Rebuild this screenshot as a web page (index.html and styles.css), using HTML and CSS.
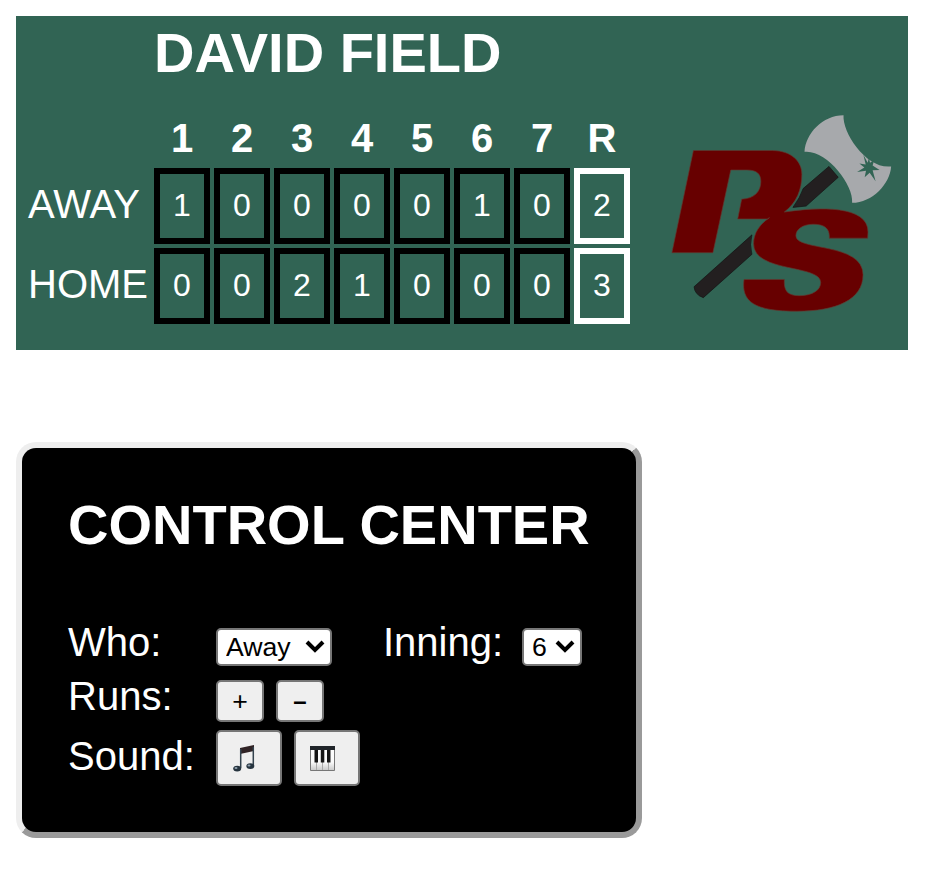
FILE: index.html
```html
<!DOCTYPE html>
<html lang="en">
<head>
<meta charset="utf-8">
<title>David Field</title>
<link rel="stylesheet" href="styles.css">
</head>
<body>
<section class="board">
  <div class="scores">
    <h1 class="title">DAVID FIELD</h1>
    <div class="grid">
      <span></span><b>1</b><b>2</b><b>3</b><b>4</b><b>5</b><b>6</b><b>7</b><b>R</b>
      <span class="team">AWAY</span><span class="cell">1</span><span class="cell">0</span><span class="cell">0</span><span class="cell">0</span><span class="cell">0</span><span class="cell">1</span><span class="cell">0</span><span class="cell total">2</span>
      <span class="team">HOME</span><span class="cell">0</span><span class="cell">0</span><span class="cell">2</span><span class="cell">1</span><span class="cell">0</span><span class="cell">0</span><span class="cell">0</span><span class="cell total">3</span>
    </div>
  </div>
  <svg class="logo" viewBox="0 0 750 690" aria-hidden="true">
    <g fill="#231f20" stroke="#111" stroke-width="2">
      <path d="M511 198L539 231L442 318L402 322Q424 292 433 265Z"/>
      <path d="M278 405L103 562Q105 586 131 595L278 464Q270 435 278 405Z"/>
    </g>
    <path fill="#a7a9ac" d="M555 43C551 96 625 207 699 198C696 250 642 308 581 308C586 253 502 146 437 154C440 98 492 43 555 43Z"/>
    <path fill="#316454" d="M615 163L628 187L632 171L635 187L648 178L643 195L664 209L643 210L652 243L634 217L619 231L623 211L596 215L618 201L603 189L622 192Z"/>
    <g fill="#670000" stroke="#63382f" stroke-width="2">
      <path d="M101 150H340C398 151 429 183 429 222C429 269 413 308 376 336C480 320 631 315 629 397L628 415H512C514 386 498 373 464 373C430 373 411 389 411 408C411 455 614 427 614 526C614 602 532 636 414 636C286 636 245 608 254 540H376C374 575 386 589 421 589C460 589 486 573 486 549C486 494 283 520 283 432C283 399 302 373 331 353L325 357H235L247 297C286 296 305 273 305 244C305 219 291 209 263 209H214L160 459H36Z"/>
    </g>
  </svg>
</section>
<section class="panel">
  <h1 class="title">CONTROL CENTER</h1>
  <div class="row">
    <label class="name" for="who">Who:</label>
    <span class="pick"><select id="who"><option>Away</option><option>Home</option></select><svg viewBox="0 0 20 14"><path d="M2 3L10 11L18 3"/></svg></span>
    <label class="inning" for="inning">Inning:</label>
    <span class="pick small"><select id="inning"><option>6</option></select><svg viewBox="0 0 20 14"><path d="M2 3L10 11L18 3"/></svg></span>
  </div>
  <div class="row runs">
    <span class="name">Runs:</span>
    <button>+</button><button class="minus">–</button>
  </div>
  <div class="row sound">
    <span class="name">Sound:</span>
    <button><svg class="notes" viewBox="0 0 22 27"><path d="M7 3L21 0V6L7 9Z" fill="#302325"/><path d="M7.7 4V23M20.3 2V21" stroke="#34434e" stroke-width="1.5"/><ellipse cx="4.2" cy="23.6" rx="4" ry="2.9" fill="#26343f"/><ellipse cx="17.3" cy="21.1" rx="4" ry="2.9" fill="#26343f"/><ellipse cx="3" cy="23" rx="1.5" ry="1" fill="#93a4b2"/><ellipse cx="16" cy="20.5" rx="1.5" ry="1" fill="#93a4b2"/></svg></button><button><svg class="piano" viewBox="0 0 25 25"><defs><linearGradient id="keys" x2="0" y2="1"><stop stop-color="#fff"/><stop offset=".65" stop-color="#fafafa"/><stop offset="1" stop-color="#c8c8c8"/></linearGradient></defs><path d="M.5 1H24.5V24.5H.5Z" fill="url(#keys)" stroke="#777"/><path d="M6.5 16V24M12.5 16V24M18.5 16V24" stroke="#aaa"/><path d="M0 0H25V4H0Z" fill="#20252a"/><path d="M4.5 4H8V16.5H4.5ZM10.8 4H14.3V16.5H10.8ZM17 4H20.5V16.5H17Z" fill="#161616"/></svg></button>
  </div>
</section>
</body>
</html>
```
FILE: styles.css
```css
* { box-sizing: border-box; }
body {
  margin: 16px;
  background: #fff;
  color: #fff;
  font: 40px/46px "Liberation Sans", Arial, sans-serif;
}
.title { margin: 0; font-size: 56px; line-height: 64px; white-space: nowrap; }
.board {
  display: flex;
  width: 892px;
  height: 334px;
  background: #316454;
}
.scores { width: 614px; padding: 5px 0 0 12px; }
.scores .title { padding-left: 126px; }
.grid {
  display: grid;
  grid-template-columns: 122px repeat(8, 56px);
  grid-template-rows: 52px 76px 76px;
  gap: 4px;
  margin-top: 27px;
  text-align: center;
}
.grid b { line-height: 52px; }
.team { text-align: left; line-height: 72px; }
.cell { border: 6px solid #000; font-size: 32px; line-height: 62px; }
.total { border-color: #fff; }
.logo { width: 250px; height: 230px; margin: 84px 0 0 30px; }
.panel {
  width: 626px;
  height: 396px;
  margin-top: 92px;
  padding: 45px 46px 0;
  border: 6px solid;
  border-color: #eee #9a9a9a #9a9a9a #eee;
  border-radius: 20px;
  background: #000;
}
.row { display: flex; align-items: flex-start; height: 46px; margin-top: 62px; }
.name { width: 148px; }
.inning { width: 139px; margin-left: 51px; }
.pick { position: relative; width: 116px; height: 38px; margin-top: 9px; }
.small { width: 60px; }
.pick select {
  display: block;
  width: 100%;
  height: 38px;
  margin: 0;
  padding: 0 8px;
  appearance: none;
  border: 2px solid #767676;
  border-radius: 5px;
  background: #fff;
  color: #000;
  font: 26.67px/34px "Liberation Sans", Arial, sans-serif;
}
.pick svg { position: absolute; top: 11px; right: 7px; width: 20px; height: 14px; }
.pick path { fill: none; stroke: #000; stroke-width: 4; }
.runs { margin-top: 8px; }
.sound { margin-top: 14px; }
button {
  display: flex;
  align-items: center;
  justify-content: center;
  width: 48px;
  height: 42px;
  margin: 7px 12px 0 0;
  padding: 0;
  border: 2px solid #767676;
  border-radius: 5px;
  background: #efefef;
  color: #000;
  font: 26.67px/30px "Liberation Sans", Arial, sans-serif;
}
.minus { font-weight: bold; font-size: 24px; }
.sound button { justify-content: flex-start; width: 66px; height: 56px; margin-top: -3px; }
.notes { width: 22px; height: 27px; margin-left: 15px; }
.piano { width: 25px; height: 25px; margin-left: 14px; }
```
